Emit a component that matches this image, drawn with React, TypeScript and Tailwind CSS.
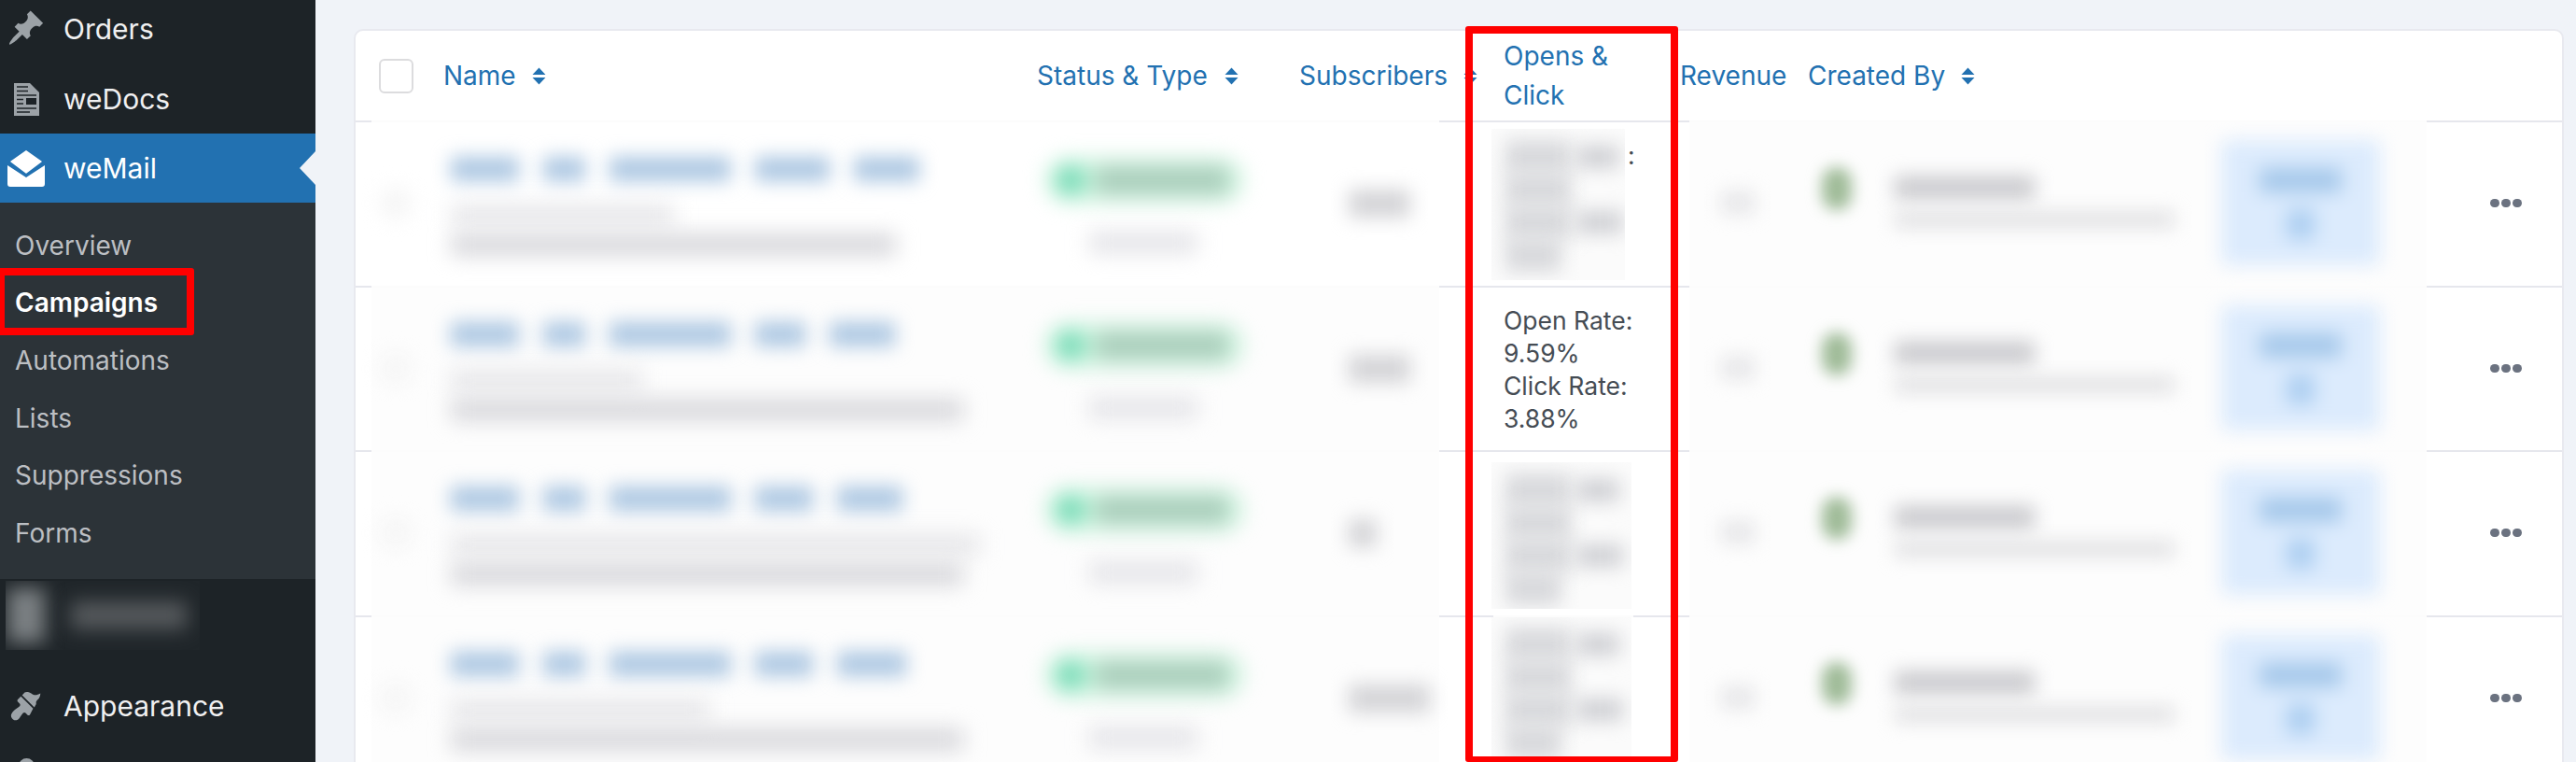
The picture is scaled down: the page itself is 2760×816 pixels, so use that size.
import React from "react";

const rows = [
  {
    title: [69, 41, 126, 76, 66],
    mid: 239,
    low: 477,
    subs: 66,
    patch: "w-[143px] mt-[7px] h-[162px]",
    rowBg: "bg-white",
  },
  {
    title: [69, 41, 126, 50, 66],
    mid: 205,
    low: 549,
    subs: 66,
    rates: ["Open Rate:", "9.59%", "Click Rate:", "3.88%"],
    rowBg: "bg-[#fdfdfd]",
  },
  {
    title: [69, 41, 126, 58, 66],
    mid: 567,
    low: 549,
    subs: 30,
    patch: "w-[150px] mt-[11px] h-[157px]",
    rowBg: "bg-[#fdfdfd]",
  },
  {
    title: [69, 41, 126, 58, 70],
    mid: 277,
    low: 549,
    subs: 87,
    patch: "w-[150px] mt-0 h-[175px]",
    rowBg: "bg-[#fdfdfd]",
  },
];

function SortIcon() {
  return (
    <svg viewBox="0 0 15 19" className="w-[15px] h-[19px] shrink-0 fill-[#2271b1]">
      <path d="M7.5 0.5 L14.5 8 H0.5Z" />
      <path d="M0.5 11 H14.5 L7.5 18.5Z" />
    </svg>
  );
}

function Separator({ split }: { split?: boolean }) {
  return (
    <div className="flex h-[2px]">
      <div className="w-[17px] bg-[#e6e7ed]" />
      <div className="w-[1144px] bg-[#fcfcfc]" />
      {split ? (
        <>
          <div className="w-[58px] bg-[#e6e7ed]" />
          <div className="w-[150px] bg-[#fcfcfc]" />
          <div className="w-[60px] bg-[#e6e7ed]" />
        </>
      ) : (
        <div className="w-[268px] bg-[#e6e7ed]" />
      )}
      <div className="w-[790px] bg-[#fcfcfc]" />
      <div className="flex-1 bg-[#e6e7ed]" />
    </div>
  );
}

function HiddenRates({ className }: { className: string }) {
  return (
    <div className={`${className} bg-[#fbfbfb] overflow-hidden pl-[15px] pt-[12px]`}>
      {[
        [70, 46],
        [70, 0],
        [70, 50],
        [60, 0],
      ].map(([a, b], i) => (
        <div key={i} className="flex h-[35px] items-center gap-[6px]">
          <div className="h-[36px] bg-[#d8d9dc] blur-[10px]" style={{ width: a }} />
          {b > 0 && <div className="h-[24px] bg-[#cfd0d4] blur-[10px]" style={{ width: b }} />}
        </div>
      ))}
    </div>
  );
}

function Row({ row, index }: { row: (typeof rows)[number]; index: number }) {
  return (
    <div className="flex h-[174.6px] overflow-hidden">
      <div className="w-[17px] shrink-0 bg-white" />
      <div className={`flex w-[1144px] shrink-0 ${row.rowBg}`}>
        {/* checkbox */}
        <div className="w-[77px] shrink-0 pl-[9px] pt-[69px]">
          <div className="w-[34px] h-[36px] rounded-full bg-[#f6f6f6] blur-[10px]" />
        </div>
        {/* name */}
        <div className="w-[626px] shrink-0 pl-[8px] pt-[37px]">
          <div className="flex gap-[26px] h-[26px]">
            {row.title.map((w, i) => (
              <div key={i} className="h-full bg-[#acc7e2] blur-[10px]" style={{ width: w + 4 }} />
            ))}
          </div>
          <div className="mt-[25px] h-[22px] bg-[#e6e6e9] blur-[11px]" style={{ width: row.mid }} />
          <div className="mt-[9px] h-[24px] bg-[#d8d8dc] blur-[11px]" style={{ width: row.low }} />
        </div>
        {/* status */}
        <div className="w-[291px] shrink-0 pl-[19px] pt-[38px]">
          <div className="flex items-center w-[212px] h-[48px] rounded-full bg-[#cff5e0] blur-[11px] pl-[12px]">
            <div className="w-[30px] h-[32px] rounded-full bg-[#74dab6]" />
            <div className="ml-[12px] w-[142px] h-[30px] bg-[#abcebc]" />
          </div>
          <div className="ml-[47px] mt-[31px] w-[116px] h-[24px] bg-[#e5e5e9] blur-[11px]" />
        </div>
        {/* subscribers */}
        <div className="w-[150px] shrink-0 pl-[53px] pt-[72px]">
          <div className="h-[30px] bg-[#d4d4d7] blur-[10px]" style={{ width: row.subs }} />
        </div>
      </div>
      <div className="w-[56px] shrink-0 bg-white" />
      {/* opens & click */}
      <div className="w-[212px] shrink-0 bg-white flex">
        {row.rates ? (
          <div className="pl-[13px] pt-[18px] text-[26.5px] leading-[35px] text-[#454c54]">
            {row.rates.map((line) => (
              <div key={line}>{line}</div>
            ))}
          </div>
        ) : (
          <>
            <HiddenRates className={row.patch as string} />
            {index === 0 && (
              <span className="pl-[3px] pt-[18px] text-[26.5px] leading-[35px] text-[#454c54]">:</span>
            )}
          </>
        )}
      </div>
      <div className="flex w-[790px] shrink-0 bg-[#fdfdfd]">
        {/* revenue */}
        <div className="w-[127px] shrink-0 pl-[34px] pt-[74px]">
          <div className="w-[36px] h-[24px] bg-[#e6e6e8] blur-[10px]" />
        </div>
        {/* created by */}
        <div className="w-[439px] shrink-0 flex pl-[15px] pt-[48px]">
          <div className="w-[32px] h-[46px] rounded-full bg-[#9fbb98] blur-[8px]" />
          <div className="ml-[46px] pt-[10px]">
            <div className="w-[150px] h-[24px] bg-[#c8c8cc] blur-[10px]" />
            <div className="mt-[14px] w-[300px] h-[16px] bg-[#dedee0] blur-[10px]" />
          </div>
        </div>
        {/* report button */}
        <div className="w-[224px] shrink-0 pl-[4px] pt-[19px]">
          <div className="flex flex-col items-center w-[170px] h-[134px] rounded-md bg-[#dcebfd] blur-[10px] pt-[30px]">
            <div className="w-[88px] h-[26px] bg-[#a5c8ea]" />
            <div className="mt-[18px] w-[30px] h-[32px] bg-[#adcff1]" />
          </div>
        </div>
      </div>
      {/* actions */}
      <div className="flex flex-1 bg-white pl-[68px] pt-[82px] gap-[2px]">
        <div className="w-[10px] h-[9px] rounded-full bg-[#6b7280]" />
        <div className="w-[10px] h-[9px] rounded-full bg-[#6b7280]" />
        <div className="w-[10px] h-[9px] rounded-full bg-[#6b7280]" />
      </div>
    </div>
  );
}

function SubItem({ children, active }: { children: React.ReactNode; active?: boolean }) {
  return (
    <div
      className={
        active
          ? "relative flex items-center h-[61.6px] pl-[16px] text-[28px] font-semibold text-white"
          : "flex items-center h-[61.6px] pl-[16px] text-[28px] text-[#bcbfc3]"
      }
    >
      {children}
      {active && (
        <div className="absolute -left-[3px] top-[-7px] w-[211px] h-[72px] rounded-[3px] border-8 border-[#ff0000]" />
      )}
    </div>
  );
}

export default function App() {
  return (
    <div
      className="relative flex h-[816px] w-[2760px] overflow-hidden bg-[#f0f3f8]"
      style={{ fontFamily: "Inter, 'Liberation Sans', sans-serif" }}
    >
      {/* admin sidebar */}
      <aside className="w-[338px] shrink-0 bg-[#1d2327] text-[30px] text-[#f0f0f1]">
        <div className="flex items-center h-[75px] -mt-[6px] pl-[68px] relative">
          <svg viewBox="0 0 20 20" className="absolute left-[7px] top-[15px] w-[42px] h-[42px] fill-[#9ca2a7]">
            <path d="M10.44 3.02l1.82-1.82 6.36 6.35-1.83 1.82c-1.05-.68-2.48-.57-3.41.36l-.75.75c-.92.93-1.04 2.35-.35 3.41l-1.83 1.82-2.41-2.41-2.8 2.79c-.42.42-3.38 2.71-3.8 2.29s1.86-3.39 2.28-3.81l2.79-2.79L4.1 9.36l1.83-1.82c1.05.69 2.48.57 3.41-.36l.75-.75c.93-.92 1.04-2.35.35-3.41z" />
          </svg>
          Orders
        </div>
        <div className="flex items-center h-[74px] pl-[15px]">
          <svg viewBox="0 0 27 35" className="w-[27px] h-[35px] mr-[26px] shrink-0">
            <path d="M0 0H17L27 10V35H0Z" fill="#9ca2a7" />
            <path
              d="M3 4H15M3 8.5H15M3 13H24M3 17.5H10M3 22H10M3 27H24M3 31H17"
              stroke="#1d2327"
              strokeWidth="1.6"
              fill="none"
            />
            <rect x="13" y="16" width="11" height="7" fill="#1d2327" />
          </svg>
          weDocs
        </div>
        <div className="flex items-center h-[74px] pl-[8px] bg-[#2271b1] text-white">
          <svg viewBox="0 0 40 39" className="w-[40px] h-[39px] mr-[20px] shrink-0 fill-white">
            <path d="M20 0.8 L36 12 L20 24 L4 12Z" stroke="white" strokeWidth="1.5" strokeLinejoin="round" />
            <path d="M0 16 L20 29 L40 16 V36 a3 3 0 0 1 -3 3 H3 a3 3 0 0 1 -3 -3Z" />
          </svg>
          weMail
          <div className="ml-auto w-0 h-0 border-y-[18px] border-y-transparent border-r-[17px] border-r-[#f0f3f8]" />
        </div>
        <div className="h-[403px] bg-[#2c3338] pt-[15px]">
          <SubItem>Overview</SubItem>
          <SubItem active>Campaigns</SubItem>
          <SubItem>Automations</SubItem>
          <SubItem>Lists</SubItem>
          <SubItem>Suppressions</SubItem>
          <SubItem>Forms</SubItem>
        </div>
        {/* blurred menu item */}
        <div className="flex items-center ml-[6px] mt-[2px] w-[208px] h-[74px] bg-[#20262a] overflow-hidden">
          <div className="ml-[2px] w-[40px] h-[58px] bg-[#7b8083] blur-[10px]" />
          <div className="ml-[28px] w-[124px] h-[30px] bg-[#55595c] blur-[10px]" />
        </div>
        <div className="flex items-center h-[74px] mt-[23px] pl-[68px] relative">
          <svg viewBox="0 0 20 20" className="absolute left-[8px] top-[18px] w-[41px] h-[37px] fill-[#9ca2a7]">
            <path d="M14.48 11.06L7.41 3.99l1.5-1.5c.5-.56 2.3-.47 3.51.32.21.14.7.5 1.07.74.31.21.62.33.98.36 1.1.1 2.3-.1 3.53-.91-.1 1.7-.6 2.7-1.3 3.4-.4.4-.8.7-1.1 1.3-.3.6.2 1.3-.3 1.9zM13.77 11.77l-7.07-7.07-1.77 1.77c-.39.39-.39 1.02 0 1.41l1.06 1.06c.39.39.39 1.03 0 1.42-.6.6-1.43 1.11-2.21 1.69-.35.26-.7.53-1.01.84-1.34 1.34-1.77 2.1-1.77 3.08 0 .98.6 1.6 1.2 2.1.6.5 1.3.6 2 .4.96-.28 1.5-1 2.1-1.9.58-.78 1.09-1.61 1.69-2.21.39-.39 1.03-.39 1.42 0l1.06 1.06c.39.39 1.02.39 1.41 0z" />
          </svg>
          Appearance
        </div>
        <div className="pl-[20px] pt-[19px]">
          <div className="w-[17px] h-[17px] rounded-full bg-[#9ca2a7]" />
        </div>
      </aside>

      {/* table card */}
      <main className="flex-1 pl-[41px] pr-[13px] pt-[31px]">
        <div className="h-[900px] rounded-t-[10px] border-2 border-[#e8e9ef] bg-white">
          <div className="flex items-center h-[96px] text-[28px] text-[#2271b1]">
            <div className="w-[94px] shrink-0 pl-[25px]">
              <div className="w-[37px] h-[37px] rounded-md border-2 border-[#dcdcde] bg-white" />
            </div>
            <div className="flex items-center w-[636px] shrink-0">
              Name
              <span className="ml-[17px]">
                <SortIcon />
              </span>
            </div>
            <div className="flex items-center w-[281px] shrink-0">
              Status &amp; Type
              <span className="ml-[18px]">
                <SortIcon />
              </span>
            </div>
            <div className="flex items-center w-[219px] shrink-0">
              Subscribers
              <span className="ml-[17px]">
                <SortIcon />
              </span>
            </div>
            <div className="w-[189px] shrink-0 leading-[42px]">
              Opens &amp;
              <br />
              Click
            </div>
            <div className="w-[137px] shrink-0">Revenue</div>
            <div className="flex items-center">
              Created By
              <span className="ml-[17px]">
                <SortIcon />
              </span>
            </div>
          </div>
          <Separator />
          {rows.map((row, i) => (
            <div key={i}>
              <Row row={row} index={i} />
              {i < rows.length - 1 && <Separator split={i === 2} />}
            </div>
          ))}
        </div>
      </main>

      {/* highlight around the opens column */}
      <div className="absolute left-[1570px] top-[28px] w-[228px] h-[788px] rounded-[3px] border-8 border-b-[6px] border-[#ff0000]" />
    </div>
  );
}
